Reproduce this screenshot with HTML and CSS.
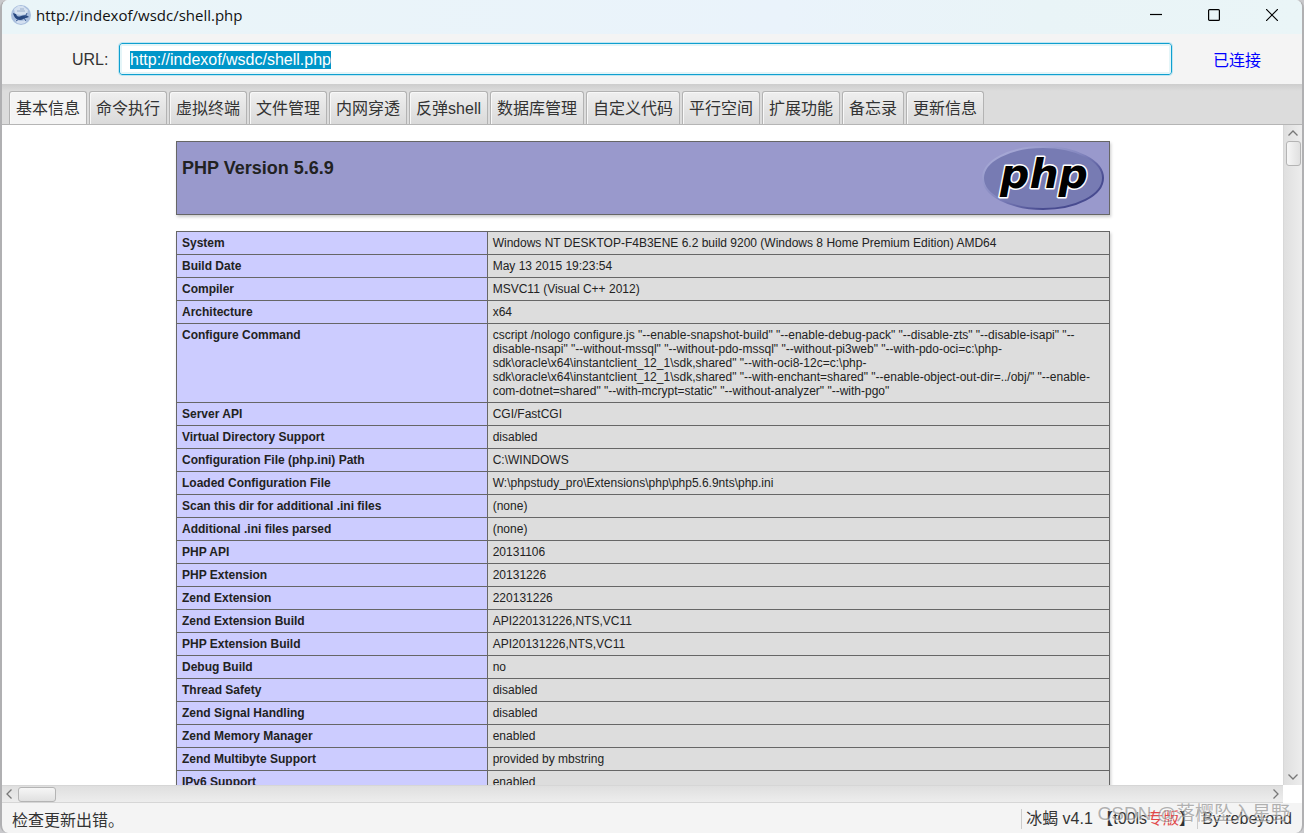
FILE: index.html
```html
<!DOCTYPE html>
<html lang="zh-CN">
<head>
<meta charset="utf-8">
<title>http://indexof/wsdc/shell.php</title>
<link rel="stylesheet" href="styles.css">
</head>
<body>
<div class="window">
  <header class="titlebar">
    <svg class="app-icon" viewBox="0 0 20 20" aria-hidden="true">
      <circle cx="10" cy="10" r="10" fill="#a9bedd"/>
      <path d="M3 4 7 1l5 0 5 4-1 4-6 1-6-1z" fill="#d5e1f0"/>
      <path d="M4 15l6 1 6-1-2 3-4 1-4-1z" fill="#d3dff0"/>
      <path d="M2 8l3 1c1 3 3 3 5 2 3-1 6-1 8 1l-3 1c-2 0-3 2-6 2-4 0-6-3-7-7z" fill="#27477f"/>
      <path d="M14 12l2-4M8 14l-3 2M13 13l2 3" stroke="#3c5c94" stroke-width="1" fill="none"/>
      <path d="M6 6h8M9 4h4" stroke="#9aaecb" stroke-width="1" fill="none"/>
    </svg>
    <h1 class="title">http://indexof/wsdc/shell.php</h1>
    <div class="window-buttons">
      <button class="window-button" type="button" aria-label="最小化"><svg viewBox="0 0 12 12"><path d="M0 5.5h12"/></svg></button>
      <button class="window-button" type="button" aria-label="最大化"><svg viewBox="0 0 12 12"><rect x=".6" y=".6" width="10.8" height="10.8" rx="1"/></svg></button>
      <button class="window-button" type="button" aria-label="关闭"><svg viewBox="0 0 12 12"><path d="M0 0l12 12M12 0L0 12"/></svg></button>
    </div>
  </header>

  <div class="toolbar">
    <label class="url-label" for="url">URL:</label>
    <input class="url-input" id="url" type="text" value="http://indexof/wsdc/shell.php" spellcheck="false">
    <span class="connection">已连接</span>
  </div>

  <nav class="tabs" role="tablist">
    <button class="tab tab-active" type="button" role="tab" aria-selected="true">基本信息</button>
    <button class="tab" type="button" role="tab">命令执行</button>
    <button class="tab" type="button" role="tab">虚拟终端</button>
    <button class="tab" type="button" role="tab">文件管理</button>
    <button class="tab" type="button" role="tab">内网穿透</button>
    <button class="tab" type="button" role="tab">反弹shell</button>
    <button class="tab" type="button" role="tab">数据库管理</button>
    <button class="tab" type="button" role="tab">自定义代码</button>
    <button class="tab" type="button" role="tab">平行空间</button>
    <button class="tab" type="button" role="tab">扩展功能</button>
    <button class="tab" type="button" role="tab">备忘录</button>
    <button class="tab" type="button" role="tab">更新信息</button>
  </nav>

  <div class="view">
    <main class="page">
      <section class="banner">
        <h2 class="version">PHP Version 5.6.9</h2>
        <svg class="php-logo" viewBox="0 0 122 66" role="img" aria-label="PHP">
          <defs>
            <linearGradient id="rim" x1="0" y1="0" x2="1" y2="1">
              <stop offset="0" stop-color="#b4b6de"/>
              <stop offset=".45" stop-color="#8588c0"/>
              <stop offset=".75" stop-color="#484b90"/>
              <stop offset="1" stop-color="#484b90"/>
            </linearGradient>
          </defs>
          <ellipse cx="61" cy="33" rx="60" ry="31" fill="#777bb3" stroke="url(#rim)" stroke-width="2"/>
          <text class="php-word" x="62" y="43" text-anchor="middle">php</text>
        </svg>
      </section>
      <table class="info">
        <tbody>
          <tr><th scope="row">System</th><td>Windows NT DESKTOP-F4B3ENE 6.2 build 9200 (Windows 8 Home Premium Edition) AMD64</td></tr>
          <tr><th scope="row">Build Date</th><td>May 13 2015 19:23:54</td></tr>
          <tr><th scope="row">Compiler</th><td>MSVC11 (Visual C++ 2012)</td></tr>
          <tr><th scope="row">Architecture</th><td>x64</td></tr>
          <tr><th scope="row">Configure Command</th><td>cscript /nologo configure.js "--enable-snapshot-build" "--enable-debug-pack" "--disable-zts" "--disable-isapi" "--<br>disable-nsapi" "--without-mssql" "--without-pdo-mssql" "--without-pi3web" "--with-pdo-oci=c:\php-<br>sdk\oracle\x64\instantclient_12_1\sdk,shared" "--with-oci8-12c=c:\php-<br>sdk\oracle\x64\instantclient_12_1\sdk,shared" "--with-enchant=shared" "--enable-object-out-dir=../obj/" "--enable-<br>com-dotnet=shared" "--with-mcrypt=static" "--without-analyzer" "--with-pgo"</td></tr>
          <tr><th scope="row">Server API</th><td>CGI/FastCGI</td></tr>
          <tr><th scope="row">Virtual Directory Support</th><td>disabled</td></tr>
          <tr><th scope="row">Configuration File (php.ini) Path</th><td>C:\WINDOWS</td></tr>
          <tr><th scope="row">Loaded Configuration File</th><td>W:\phpstudy_pro\Extensions\php\php5.6.9nts\php.ini</td></tr>
          <tr><th scope="row">Scan this dir for additional .ini files</th><td>(none)</td></tr>
          <tr><th scope="row">Additional .ini files parsed</th><td>(none)</td></tr>
          <tr><th scope="row">PHP API</th><td>20131106</td></tr>
          <tr><th scope="row">PHP Extension</th><td>20131226</td></tr>
          <tr><th scope="row">Zend Extension</th><td>220131226</td></tr>
          <tr><th scope="row">Zend Extension Build</th><td>API220131226,NTS,VC11</td></tr>
          <tr><th scope="row">PHP Extension Build</th><td>API20131226,NTS,VC11</td></tr>
          <tr><th scope="row">Debug Build</th><td>no</td></tr>
          <tr><th scope="row">Thread Safety</th><td>disabled</td></tr>
          <tr><th scope="row">Zend Signal Handling</th><td>disabled</td></tr>
          <tr><th scope="row">Zend Memory Manager</th><td>enabled</td></tr>
          <tr><th scope="row">Zend Multibyte Support</th><td>provided by mbstring</td></tr>
          <tr><th scope="row">IPv6 Support</th><td>enabled</td></tr>
        </tbody>
      </table>
    </main>
    <div class="scroll scroll-v">
      <svg class="arrow-v" viewBox="0 0 10 6"><path d="M.5 5.500 5 1l4.500 4.500"/></svg>
      <div class="thumb thumb-v"></div>
      <svg class="arrow-v arrow-end" viewBox="0 0 10 6"><path d="M.5.5 5 5 9.500.5"/></svg>
    </div>
    <div class="scroll scroll-h">
      <svg class="arrow-h" viewBox="0 0 6 10"><path d="M5.500.5 1 5l4.500 4.500"/></svg>
      <div class="thumb thumb-h"></div>
      <svg class="arrow-h arrow-end" viewBox="0 0 6 10"><path d="M.5.5 5 5 .5 9.500"/></svg>
    </div>
  </div>

  <footer class="status">
    <span class="message">检查更新出错。</span>
    <span class="product">冰蝎 v4.1 【t00ls<span class="edition">专版</span>】</span>
    <span class="author">By rebeyond</span>
    <span class="watermark">CSDN @落樱坠入星野</span>
  </footer>
</div>
<script src="main.js"></script>
</body>
</html>
```
FILE: styles.css
```css
* {
  box-sizing: border-box;
}

body {
  margin: 0;
  background: #c9c9cc;
  font-family: "Liberation Sans", "Noto Sans CJK SC", sans-serif;
  font-size: 16px;
  color: #333;
}

.window {
  display: flex;
  flex-direction: column;
  height: 100vh;
  border: solid #b0b0b2;
  border-width: 0 2px;
  border-radius: 8px;
  background: #f4f4f4;
  overflow: hidden;
}

.titlebar {
  display: flex;
  flex: none;
  align-items: center;
  height: 34px;
  padding: 0 1px 4px 9px;
  background: linear-gradient(90deg, #eaf5f8, #eaf3fb 60%, #e9f4f7 80%, #eaf5f7);
}

.app-icon {
  width: 20px;
  height: 20px;
}

.title {
  flex: 1;
  margin: 0 0 0 5px;
  font: 400 15px/20px "Open Sans", "Noto Sans", sans-serif;
  color: #111;
}

.window-buttons {
  display: flex;
}

.window-button {
  display: flex;
  align-items: center;
  justify-content: center;
  width: 58px;
  height: 30px;
  padding: 0;
  border: 0;
  background: none;
}

.window-button svg {
  width: 12px;
  height: 12px;
  fill: none;
  stroke: #000;
  stroke-width: 1.2;
}

.toolbar {
  display: flex;
  flex: none;
  align-items: center;
  height: 50px;
  padding-left: 70px;
}

.url-label {
  width: 47px;
  padding-top: 2px;
}

.url-input {
  flex: 1;
  height: 32px;
  padding: 2px 10px 0;
  border: 1px solid #0f9fcf;
  border-radius: 3px;
  outline: 1px solid #bfe6f2;
  background: #fff;
  box-shadow: inset 0 0 0 2px #e4f5f8;
  font: 16px/20px "Liberation Sans", sans-serif;
  color: #333;
}

.url-input::selection {
  background: #0096c9;
  color: #fff;
}

.connection {
  width: 130px;
  text-align: center;
  color: #00f;
}

.tabs {
  display: flex;
  flex: none;
  align-items: flex-end;
  gap: 2px;
  height: 41px;
  padding-left: 7px;
  border-bottom: 1px solid #b5b5b5;
  background: linear-gradient(#cdcdcd, #dcdcdc 7px);
}

.tab {
  height: 33px;
  padding: 2px 6px 0;
  border: 1px solid #b3b3b3;
  border-bottom: 0;
  border-radius: 3px 3px 0 0;
  background: linear-gradient(#efefef, #dadada);
  box-shadow: inset 1px 1px #f8f8f8;
  font: 16px/24px "Liberation Sans", "Noto Sans CJK SC", sans-serif;
  color: #333;
  white-space: nowrap;
}

.tab-active {
  background: #f4f4f4;
}

.view {
  display: grid;
  flex: 1;
  grid-template: minmax(0, 1fr) 18px / minmax(0, 1fr) 19px;
  min-height: 0;
  background: #fff;
}

.page {
  padding: 16px 173px 0 174px;
  overflow: hidden;
  color: #222;
}

.banner {
  display: flex;
  align-items: flex-start;
  justify-content: space-between;
  height: 74px;
  margin-bottom: 16px;
  padding: 3px 5px;
  border: 1px solid #666;
  background: #9999cc;
  box-shadow: 1px 2px 3px #ccc;
}

.version {
  margin: 12px 0 0;
  font-size: 18px;
  line-height: 22px;
}

.php-logo {
  width: 122px;
  height: 66px;
  overflow: visible;
}

.php-word {
  font: italic 700 41px "DejaVu Sans", sans-serif;
  fill: #000;
  stroke: #fff;
  stroke-width: 3px;
  stroke-linejoin: round;
  paint-order: stroke;
}

.info {
  width: 100%;
  border-collapse: collapse;
  table-layout: fixed;
  box-shadow: 1px 2px 3px #ccc;
  font-size: 12px;
  line-height: 14px;
}

.info th,
.info td {
  padding: 4px 5px;
  border: 1px solid #666;
  text-align: left;
  vertical-align: top;
}

.info th {
  width: 33.3%;
  background: #ccccff;
}

.info td {
  background: #ddd;
  white-space: nowrap;
}

.scroll {
  display: flex;
  align-items: center;
}

.scroll svg {
  flex: none;
  fill: none;
  stroke: #777;
  stroke-width: 1.3;
}

.scroll-v {
  flex-direction: column;
  padding: 5px 0;
  border-left: 1px solid #d8d8d8;
  background: linear-gradient(90deg, #dfdfdf, #ededed);
}

.scroll-h {
  padding: 0 4px;
  border: solid #d6d6d6;
  border-width: 1px 0;
  background: linear-gradient(#dfdfdf, #ededed);
}

.arrow-v {
  width: 10px;
  height: 6px;
}

.arrow-h {
  width: 6px;
  height: 10px;
}

.scroll-v .arrow-end {
  margin-top: auto;
}

.scroll-h .arrow-end {
  margin-left: auto;
}

.thumb {
  flex: none;
  border: 1px solid #b4b4b4;
  border-radius: 3px;
}

.thumb-v {
  width: 15px;
  height: 25px;
  margin-top: 5px;
  background: linear-gradient(90deg, #f6f6f6, #e0e0e0);
}

.thumb-h {
  width: 38px;
  height: 15px;
  margin-left: 6px;
  background: linear-gradient(#f6f6f6, #e0e0e0);
}

.status {
  position: relative;
  display: flex;
  flex: none;
  align-items: center;
  height: 30px;
  padding: 2px 10px 0;
}

.message {
  flex: 1;
}

.product,
.author {
  padding-left: 4px;
  border-left: 1px solid #ccc;
  line-height: 20px;
  white-space: nowrap;
}

.product {
  width: 176px;
}

.edition {
  color: #e04848;
}

.watermark {
  position: absolute;
  top: -2px;
  right: 12px;
  font-size: 19px;
  line-height: 26px;
  color: rgba(130, 130, 130, 0.6);
  text-shadow: 1px 1px #fff8;
  white-space: nowrap;
}
```
FILE: main.js
```js
const url = document.getElementById("url");
url.focus();
url.select();
```
